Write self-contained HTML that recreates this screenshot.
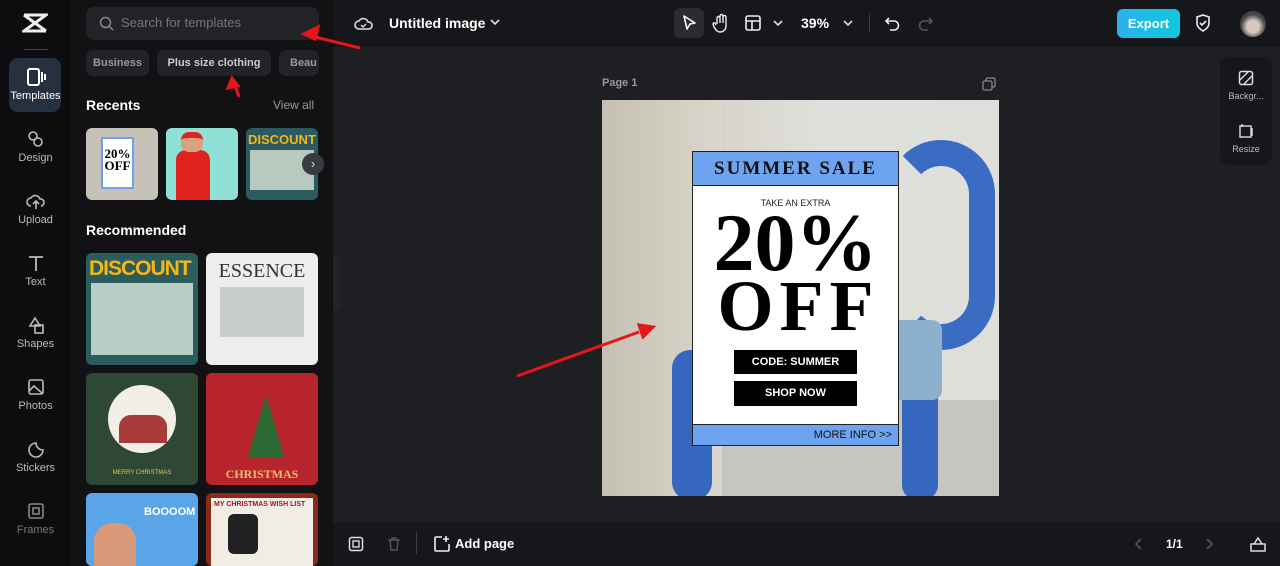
<!DOCTYPE html>
<html><head><style>
*{box-sizing:border-box;margin:0;padding:0}
body{width:1280px;height:566px;overflow:hidden;background:#1e1f23;font-family:"Liberation Sans",sans-serif;position:relative;color:#fff}
.abs{position:absolute}
.rail{left:0;top:0;width:71px;height:566px;background:#0d0d0f}
.panel{left:71px;top:0;width:262px;height:566px;background:#121215}
.top{left:333px;top:0;width:947px;height:47px;background:#16171a}
.bot{left:333px;top:522px;width:947px;height:44px;background:#16171a}
.ri{width:71px;text-align:center;font-size:11px;color:#bbb}
.ri svg{display:block;margin:0 auto 4px}
.chip{top:50px;height:26px;border-radius:7px;background:#222327;font-size:11px;color:#ccc;line-height:26px;text-align:center;font-weight:bold}
.th{border-radius:6px;overflow:hidden}
</style></head><body>
<div class="abs rail"></div>
<div class="abs panel"></div>
<div class="abs top"></div>
<div class="abs bot"></div>

<svg class="abs" style="left:22px;top:12px" width="26" height="22" viewBox="0 0 26 22"><path d="M2 3h22L2 19h22M2 3l22 16" stroke="#eee" stroke-width="3" fill="none"/></svg>
<div class="abs" style="left:24px;top:49px;width:24px;height:1px;background:#444"></div>
<div class="abs" style="left:9px;top:58px;width:52px;height:54px;border-radius:9px;background:#253041"></div>
<div class="abs ri" style="top:68px;color:#fff"><svg width="20" height="18"><rect x="2" y="1" width="11" height="16" rx="2" stroke="#fff" stroke-width="2" fill="none"/><path d="M16 4v10M19 6v6" stroke="#fff" stroke-width="2"/></svg>Templates</div>
<div class="abs ri" style="top:130px"><svg width="20" height="18"><circle cx="7" cy="6" r="4" stroke="#bbb" stroke-width="1.6" fill="none"/><circle cx="12" cy="12" r="4" stroke="#bbb" stroke-width="1.6" fill="none"/></svg>Design</div>
<div class="abs ri" style="top:192px"><svg width="20" height="18"><path d="M5 14a4 4 0 010-8 5 5 0 019 1 3.5 3.5 0 011 7M10 9v8M7 12l3-3 3 3" stroke="#bbb" stroke-width="1.6" fill="none"/></svg>Upload</div>
<div class="abs ri" style="top:254px"><svg width="20" height="18"><path d="M3 3h14M10 3v14" stroke="#bbb" stroke-width="1.8" fill="none"/></svg>Text</div>
<div class="abs ri" style="top:316px"><svg width="20" height="18"><path d="M9 2l5 8H4z" stroke="#bbb" stroke-width="1.6" fill="none"/><rect x="9" y="9" width="8" height="8" stroke="#bbb" stroke-width="1.6" fill="none"/></svg>Shapes</div>
<div class="abs ri" style="top:378px"><svg width="20" height="18"><rect x="3" y="2" width="14" height="14" rx="2" stroke="#bbb" stroke-width="1.6" fill="none"/><path d="M3 13l5-5 9 8" stroke="#bbb" stroke-width="1.6" fill="none"/></svg>Photos</div>
<div class="abs ri" style="top:440px"><svg width="20" height="18"><path d="M17 10a7 7 0 11-7-7 7 7 0 007 7z" stroke="#bbb" stroke-width="1.6" fill="none"/></svg>Stickers</div>
<div class="abs ri" style="top:502px;color:#777"><svg width="20" height="18"><rect x="3" y="2" width="14" height="14" rx="2" stroke="#888" stroke-width="1.6" fill="none"/><rect x="7" y="6" width="6" height="6" stroke="#888" stroke-width="1.6" fill="none"/></svg>Frames</div>

<div class="abs" style="left:86px;top:7px;width:233px;height:33px;border-radius:8px;background:#222327"></div>
<svg class="abs" style="left:99px;top:16px" width="15" height="15"><circle cx="6.5" cy="6.5" r="5" stroke="#888" stroke-width="1.5" fill="none"/><path d="M10 10l4 4" stroke="#888" stroke-width="1.5"/></svg>
<div class="abs" style="left:121px;top:15px;font-size:13px;color:#777">Search for templates</div>
<div class="abs chip" style="left:86px;width:63px;color:#999">Business</div>
<div class="abs chip" style="left:157px;width:114px">Plus size clothing</div>
<div class="abs chip" style="left:279px;width:40px;color:#999;text-align:left;padding-left:11px">Beau</div>

<div class="abs" style="left:86px;top:97px;font-size:14px;font-weight:bold">Recents</div>
<div class="abs" style="left:273px;top:98px;font-size:12px;color:#999">View all</div>
<div class="abs th" style="left:86px;top:128px;width:72px;height:72px;background:#c6c2b8"><div style="position:absolute;left:15px;top:9px;width:33px;height:52px;background:#fff;border:2px solid #6ea0ee"><div style="font:bold 13px 'Liberation Serif';color:#000;text-align:center;margin-top:9px;line-height:12px">20%<br>OFF</div></div></div>
<div class="abs th" style="left:166px;top:128px;width:72px;height:72px;background:#8fe0d6"><div style="position:absolute;left:10px;top:22px;width:34px;height:50px;background:#e0221f;border-radius:10px 10px 0 0"></div><div style="position:absolute;left:15px;top:4px;width:22px;height:20px;background:#d7a27e;border-radius:8px;border-top:6px solid #e0221f"></div></div>
<div class="abs th" style="left:246px;top:128px;width:72px;height:72px;background:#2a5b5e"><div style="font:bold 13px 'Liberation Sans';color:#f7b51a;padding:4px 0 0 2px">DISCOUNT</div><div style="margin:3px 4px;height:40px;background:#b8c9bf"></div></div>
<div class="abs" style="left:302px;top:153px;width:22px;height:22px;border-radius:50%;background:#3a3b40;color:#ddd;font-size:13px;text-align:center;line-height:21px">›</div>

<div class="abs" style="left:86px;top:222px;font-size:14px;font-weight:bold">Recommended</div>
<div class="abs th" style="left:86px;top:253px;width:112px;height:112px;background:#2a5d5c"><div style="font:bold 21px 'Liberation Sans';color:#f7b51a;padding:4px 0 0 3px;letter-spacing:-1px">DISCOUNT</div><div style="margin:2px 5px;height:72px;background:#b9cfc6"></div></div>
<div class="abs th" style="left:206px;top:253px;width:112px;height:112px;background:#eceeed"><div style="font:20px 'Liberation Serif';color:#333;text-align:center;padding-top:7px">ESSENCE</div><div style="margin:4px 14px;height:50px;background:#c8ccca"></div></div>
<div class="abs th" style="left:86px;top:373px;width:112px;height:112px;background:#2f4735"><div style="position:absolute;left:22px;top:12px;width:68px;height:68px;border-radius:50%;background:#f2efe9"></div><div style="position:absolute;left:33px;top:42px;width:48px;height:28px;background:#a83a3a;border-radius:12px 12px 0 0"></div><div style="position:absolute;top:97px;width:112px;text-align:center;font-size:6px;color:#e7c45a">MERRY CHRISTMAS</div></div>
<div class="abs th" style="left:206px;top:373px;width:112px;height:112px;background:#b7242b"><div style="position:absolute;left:42px;top:22px;width:0;height:0;border-left:18px solid transparent;border-right:18px solid transparent;border-bottom:62px solid #2c6a33"></div><div style="position:absolute;top:94px;width:112px;text-align:center;font:bold 12px 'Liberation Serif';color:#e9c073">CHRISTMAS</div></div>
<div class="abs th" style="left:86px;top:493px;width:112px;height:73px;background:#5aa4e8"><div style="position:absolute;left:58px;top:13px;font:bold 11px 'Liberation Sans';color:#fff">BOOOOM</div><div style="position:absolute;left:8px;top:30px;width:42px;height:43px;background:#d99a7a;border-radius:18px 18px 0 0"></div></div>
<div class="abs th" style="left:206px;top:493px;width:112px;height:73px;background:#8a2a1b"><div style="margin:5px 5px;height:68px;background:#f1ece4;font:bold 7px 'Liberation Sans';color:#a12;padding:3px">MY CHRISTMAS WISH LIST<div style="width:30px;height:40px;background:#222;margin:6px 0 0 14px;border-radius:6px"></div></div></div>
<div class="abs" style="left:333px;top:256px;width:8px;height:54px;background:#222327;border-radius:0 5px 5px 0"></div>

<svg class="abs" style="left:354px;top:14px" width="20" height="18"><path d="M5 15a4 4 0 010-8 5 5 0 019 1 3.5 3.5 0 011 7z" stroke="#ddd" stroke-width="1.6" fill="none"/><path d="M7 11l2 2 3-3" stroke="#ddd" stroke-width="1.4" fill="none"/></svg>
<div class="abs" style="left:389px;top:15px;font-size:14px;font-weight:bold">Untitled image</div>
<svg class="abs" style="left:490px;top:18px" width="10" height="8"><path d="M1 2l4 4 4-4" stroke="#ddd" stroke-width="1.6" fill="none"/></svg>
<div class="abs" style="left:674px;top:8px;width:30px;height:30px;border-radius:6px;background:#2b2c31"></div>
<svg class="abs" style="left:681px;top:14px" width="16" height="18"><path d="M3 2l11 7-5 1-3 5z" stroke="#fff" stroke-width="1.6" fill="none" stroke-linejoin="round"/></svg>
<svg class="abs" style="left:712px;top:13px" width="18" height="20"><path d="M5 11V5a1.5 1.5 0 013 0v5V3a1.5 1.5 0 013 0v7V4a1.5 1.5 0 013 0v9c0 4-3 6-6 6s-4-2-6-5l-1-3a1.3 1.3 0 012-1l1 2" stroke="#eee" stroke-width="1.4" fill="none"/></svg>
<svg class="abs" style="left:744px;top:14px" width="18" height="18"><rect x="2" y="2" width="14" height="14" rx="2" stroke="#eee" stroke-width="1.6" fill="none"/><path d="M2 7h14M8 7v9" stroke="#eee" stroke-width="1.6"/></svg>
<svg class="abs" style="left:773px;top:19px" width="10" height="8"><path d="M1 2l4 4 4-4" stroke="#ddd" stroke-width="1.6" fill="none"/></svg>
<div class="abs" style="left:801px;top:15px;font-size:14px;font-weight:bold">39%</div>
<svg class="abs" style="left:843px;top:19px" width="10" height="8"><path d="M1 2l4 4 4-4" stroke="#ddd" stroke-width="1.6" fill="none"/></svg>
<div class="abs" style="left:869px;top:14px;width:1px;height:18px;background:#3a3b40"></div>
<svg class="abs" style="left:883px;top:14px" width="18" height="18"><path d="M6 4L3 7l3 3M3 7h8a4.5 4.5 0 010 9H7" stroke="#eee" stroke-width="1.6" fill="none"/></svg>
<svg class="abs" style="left:917px;top:14px" width="18" height="18"><path d="M12 4l3 3-3 3M15 7H7a4.5 4.5 0 000 9h4" stroke="#555" stroke-width="1.6" fill="none"/></svg>
<div class="abs" style="left:1117px;top:9px;width:63px;height:29px;border-radius:6px;background:linear-gradient(90deg,#2bb1ec,#11c8dc);font-size:13px;font-weight:bold;text-align:center;line-height:29px">Export</div>
<svg class="abs" style="left:1194px;top:13px" width="18" height="20"><path d="M9 2l6 2v6c0 4-3 6-6 8-3-2-6-4-6-8V4z" stroke="#eee" stroke-width="1.6" fill="none"/><path d="M6 10l2 2 4-4" stroke="#eee" stroke-width="1.6" fill="none"/></svg>
<div class="abs" style="left:1240px;top:11px;width:26px;height:26px;border-radius:50%;background:radial-gradient(circle at 50% 60%,#d8c8c0 30%,#444 60%)"></div>

<div class="abs" style="left:1220px;top:57px;width:52px;height:108px;border-radius:9px;background:#16171a"></div>
<svg class="abs" style="left:1238px;top:70px" width="16" height="16"><rect x="1.5" y="1.5" width="13" height="13" rx="2" stroke="#ddd" stroke-width="1.5" fill="none"/><path d="M2 10l8-8M6 14l8-8" stroke="#ddd" stroke-width="1.4"/></svg>
<div class="abs" style="left:1220px;top:91px;width:52px;text-align:center;font-size:9px;color:#bbb">Backgr...</div>
<svg class="abs" style="left:1238px;top:123px" width="16" height="16"><rect x="2" y="3" width="11" height="11" stroke="#ddd" stroke-width="1.4" fill="none"/><path d="M4 1v3M14 5v8" stroke="#ddd" stroke-width="1.4"/></svg>
<div class="abs" style="left:1220px;top:144px;width:52px;text-align:center;font-size:9px;color:#bbb">Resize</div>

<div class="abs" style="left:602px;top:77px;font-size:11px;color:#999;font-weight:bold">Page 1</div>
<svg class="abs" style="left:982px;top:77px" width="14" height="14"><rect x="4" y="1" width="9" height="9" rx="1.5" stroke="#888" stroke-width="1.3" fill="none"/><rect x="1" y="4" width="9" height="9" rx="1.5" stroke="#888" stroke-width="1.3" fill="#1e1f23"/></svg>
<div class="abs" style="left:602px;top:100px;width:397px;height:396px;overflow:hidden;background:linear-gradient(90deg,#cfcbc1 0%,#d8d4ca 30%,#dfe0dc 55%,#dedfdb 100%)">
 <div style="position:absolute;left:0;top:300px;width:397px;height:96px;background:#c6c5c0"></div>
 <div style="position:absolute;left:0;top:0;width:120px;height:396px;background:linear-gradient(90deg,#c5c0b3,#dcd7cc)"></div>
 <div style="position:absolute;left:285px;top:40px;width:108px;height:210px;border:26px solid #3a6cc4;border-radius:55px;border-left-color:transparent"></div>
 <div style="position:absolute;left:300px;top:230px;width:36px;height:170px;background:#3567be;border-radius:15px"></div>
 <div style="position:absolute;left:70px;top:250px;width:40px;height:150px;background:#3567be;border-radius:18px"></div>
 <div style="position:absolute;left:280px;top:220px;width:60px;height:80px;background:#8eb0cf;border-radius:10px"></div>
</div>
<div class="abs" style="left:692px;top:151px;width:207px;height:295px;background:#fff;border:1.5px solid #222"></div>
<div class="abs" style="left:693px;top:152px;width:205px;height:34px;background:#6ea3f0;border-bottom:1.5px solid #222;font:bold 19px 'Liberation Serif',serif;color:#111;text-align:center;line-height:34px;letter-spacing:2px">SUMMER SALE</div>
<div class="abs" style="left:693px;top:198px;width:205px;text-align:center;font-size:9px;color:#222">TAKE AN EXTRA</div>
<div class="abs" style="left:693px;top:202px;width:205px;text-align:center;font:bold 82px/1 'Liberation Serif',serif;color:#000">20%</div>
<div class="abs" style="left:693px;top:270px;width:205px;text-align:center;font:bold 72px/1 'Liberation Serif',serif;color:#000;letter-spacing:6px;padding-left:6px">OFF</div>
<div class="abs" style="left:734px;top:350px;width:123px;height:24px;background:#000;font-size:11px;font-weight:bold;text-align:center;line-height:24px">CODE: SUMMER</div>
<div class="abs" style="left:734px;top:381px;width:123px;height:25px;background:#000;font-size:11px;font-weight:bold;text-align:center;line-height:25px">SHOP NOW</div>
<div class="abs" style="left:693px;top:424px;width:205px;height:21px;background:#6ea3f0;border-top:1.5px solid #222;font-size:11px;color:#111;text-align:right;padding-right:6px;line-height:20px">MORE INFO &gt;&gt;</div>

<svg class="abs" style="left:0;top:0" width="1280" height="566"><g stroke="#e8151b" stroke-width="3" fill="#e8151b"><path d="M360 48L315 37"/><path d="M304 34l14-7-3 12z"/><path d="M239 97l-4-12"/><path d="M232 78l-4 10 10-2z"/><path d="M517 376l122-44"/><path d="M653 327l-14 -2 4 12z"/></g></svg>

<svg class="abs" style="left:348px;top:536px" width="16" height="16"><rect x="1.5" y="1.5" width="13" height="13" rx="2" stroke="#ddd" stroke-width="1.5" fill="none"/><rect x="5" y="5" width="6" height="6" stroke="#ddd" stroke-width="1.4" fill="none"/></svg>
<svg class="abs" style="left:386px;top:536px" width="16" height="16"><path d="M2 4h12M6 4V2h4v2M4 4l1 10h6l1-10" stroke="#555" stroke-width="1.4" fill="none"/></svg>
<div class="abs" style="left:416px;top:532px;width:1px;height:22px;background:#3a3b40"></div>
<svg class="abs" style="left:433px;top:535px" width="18" height="18"><path d="M9 2H3a1 1 0 00-1 1v12a1 1 0 001 1h12a1 1 0 001-1V9M13 1v6M10 4h6" stroke="#eee" stroke-width="1.6" fill="none"/></svg>
<div class="abs" style="left:455px;top:536px;font-size:13px;font-weight:bold">Add page</div>
<svg class="abs" style="left:1134px;top:537px" width="10" height="14"><path d="M7 2L2 7l5 5" stroke="#555" stroke-width="1.6" fill="none"/></svg>
<div class="abs" style="left:1166px;top:537px;font-size:12px;font-weight:bold">1/1</div>
<svg class="abs" style="left:1204px;top:537px" width="10" height="14"><path d="M3 2l5 5-5 5" stroke="#555" stroke-width="1.6" fill="none"/></svg>
<svg class="abs" style="left:1249px;top:535px" width="18" height="18"><path d="M2 9h14v7H2zM5 9l4-6 4 6" stroke="#ddd" stroke-width="1.5" fill="none"/></svg>
</body></html>
